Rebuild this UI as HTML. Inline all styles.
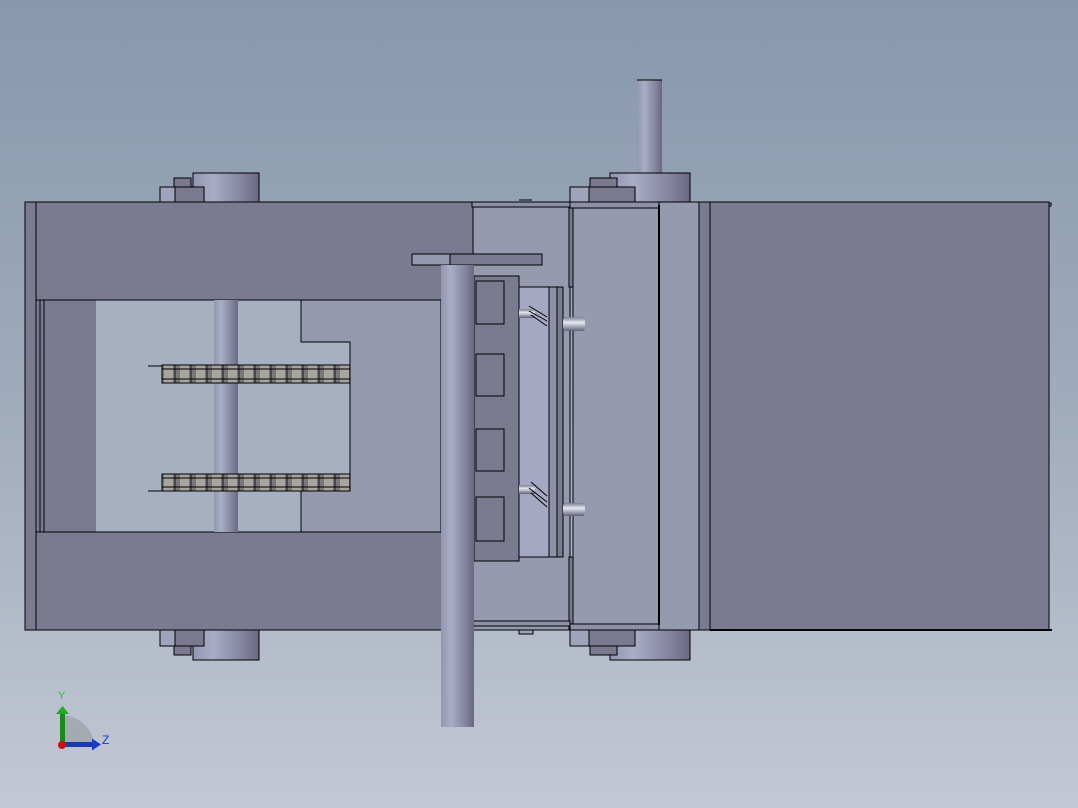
<!DOCTYPE html>
<html><head><meta charset="utf-8"><style>
html,body{margin:0;padding:0;width:1078px;height:808px;overflow:hidden}
svg{display:block}
</style></head><body>
<svg width="1078" height="808" viewBox="0 0 1078 808" xmlns="http://www.w3.org/2000/svg">
<defs>
<linearGradient id="bg" x1="0" y1="0" x2="0" y2="1">
<stop offset="0" stop-color="#8798ad"/><stop offset="0.5" stop-color="#a0abbc"/><stop offset="1" stop-color="#c3c8d4"/>
</linearGradient>
<linearGradient id="cyl" x1="0" y1="0" x2="1" y2="0">
<stop offset="0" stop-color="#9296b0"/><stop offset="0.3" stop-color="#a9adc5"/><stop offset="0.75" stop-color="#83839d"/><stop offset="1" stop-color="#6a6782"/>
</linearGradient>
<linearGradient id="pin" x1="0" y1="0" x2="0" y2="1">
<stop offset="0" stop-color="#7a7e96"/><stop offset="0.4" stop-color="#e6e8f0"/><stop offset="1" stop-color="#5f6078"/>
</linearGradient>
<pattern id="chain" x="162" y="0" width="16" height="20" patternUnits="userSpaceOnUse">
<rect width="16" height="20" fill="#7a7878"/>
<rect x="2" y="0" width="9" height="20" fill="#a8a49e"/>
<rect x="12" y="0" width="2" height="20" fill="#4a4848"/>
</pattern>
</defs>
<rect width="1078" height="808" fill="url(#bg)"/>
<g stroke="#000" stroke-width="1">
<rect x="193" y="173" width="66" height="29" fill="url(#cyl)"/>
<rect x="193" y="630" width="66" height="30" fill="url(#cyl)"/>
<rect x="160" y="187" width="44" height="15" fill="#7a7990"/>
<rect x="160" y="187" width="15" height="15" fill="#a0a4bb"/>
<rect x="174" y="178" width="17" height="9" fill="#7a7990"/>
<rect x="160" y="630" width="44" height="16" fill="#7a7990"/>
<rect x="160" y="630" width="15" height="16" fill="#a0a4bb"/>
<rect x="174" y="646" width="17" height="9" fill="#7a7990"/>
<rect x="637" y="80" width="25" height="93" fill="url(#cyl)" stroke="none"/>
<line x1="637" y1="80" x2="662" y2="80"/>
<rect x="610" y="173" width="80" height="29" fill="url(#cyl)"/>
<rect x="610" y="630" width="80" height="30" fill="url(#cyl)"/>
<rect x="570" y="187" width="65" height="15" fill="#7a7990"/>
<rect x="570" y="187" width="19" height="15" fill="#a0a4bb"/>
<rect x="590" y="178" width="27" height="9" fill="#7a7990"/>
<rect x="570" y="630" width="65" height="16" fill="#7a7990"/>
<rect x="570" y="630" width="19" height="16" fill="#a0a4bb"/>
<rect x="590" y="646" width="27" height="9" fill="#7a7990"/>
<rect x="25" y="202" width="448" height="428" fill="#7a7b90"/>
<rect x="96" y="300" width="205" height="232" fill="#a7b0c1" stroke="none"/>
<path d="M301 300 H441 V532 H301 V491 H350 V342 H301 Z" fill="#9599af"/>
<rect x="301" y="342" width="49" height="149" fill="#a7b0c1" stroke="none"/>
<path d="M301 300 V342 H350 V491 M301 491 V532" fill="none"/>
<line x1="36" y1="202" x2="36" y2="630"/>
<line x1="40" y1="300" x2="40" y2="532"/>
<line x1="44" y1="300" x2="44" y2="532"/>
<line x1="36" y1="300" x2="441" y2="300"/>
<line x1="36" y1="532" x2="441" y2="532"/>
<rect x="214" y="300" width="24" height="232" fill="url(#cyl)" stroke="none"/>
<line x1="148" y1="366" x2="162" y2="366"/>
<rect x="162" y="365" width="188" height="18" fill="url(#chain)"/>
<line x1="162" y1="369" x2="350" y2="369"/><line x1="162" y1="379" x2="350" y2="379"/>
<line x1="148" y1="491" x2="162" y2="491"/>
<rect x="162" y="474" width="188" height="17" fill="url(#chain)"/>
<line x1="162" y1="478" x2="350" y2="478"/><line x1="162" y1="487" x2="350" y2="487"/>
<rect x="473" y="207" width="97" height="423" fill="#959aaf"/>
<rect x="472" y="202" width="98" height="5" fill="#8d90a8"/>
<rect x="569" y="207" width="4" height="80" fill="#7a7b90"/>
<rect x="569" y="557" width="4" height="73" fill="#7a7b90"/>
<rect x="474" y="276" width="45" height="285" fill="#7a7b90"/>
<rect x="519" y="287" width="30" height="270" fill="#a4a8c2"/>
<rect x="549" y="287" width="8" height="270" fill="#8d90a8"/>
<rect x="557" y="287" width="6" height="270" fill="#7a7b90"/>
<rect x="476" y="281" width="28" height="43" fill="#7a7b90"/>
<rect x="476" y="354" width="28" height="42" fill="#7a7b90"/>
<rect x="476" y="429" width="28" height="42" fill="#7a7b90"/>
<rect x="476" y="497" width="28" height="44" fill="#7a7b90"/>
<rect x="473" y="621" width="97" height="5" fill="#8d90a8"/>
<rect x="519" y="309" width="16" height="9" fill="url(#pin)" stroke="none"/>
<path d="M529 306 L547 317 M529 311 L547 321 M531 315 L547 326" fill="none" stroke-width="1"/>
<rect x="519" y="485" width="16" height="9" fill="url(#pin)" stroke="none"/>
<path d="M531 482 L547 496 M529 488 L547 502 M531 493 L547 507" fill="none" stroke-width="1"/>
<rect x="573" y="202" width="86" height="428" fill="#959aaf"/>
<rect x="570" y="202" width="97" height="6" fill="#8d90a8"/>
<rect x="570" y="624" width="97" height="6" fill="#8d90a8"/>
<rect x="659" y="202" width="40" height="428" fill="#959aaf"/>
<line x1="659" y1="205" x2="659" y2="625" stroke-width="2"/>
<rect x="699" y="202" width="11" height="428" fill="#7a7b90"/>
<rect x="710" y="202" width="339" height="428" fill="#7a7b90"/>
<line x1="710" y1="630" x2="1052" y2="630" stroke-width="2"/>
<rect x="1049" y="203" width="2" height="3" fill="none"/>
<rect x="563" y="317" width="22" height="14" rx="3" fill="url(#pin)" stroke="none"/>
<rect x="563" y="503" width="22" height="13" rx="3" fill="url(#pin)" stroke="none"/>
<line x1="519" y1="200" x2="532" y2="200"/>
<rect x="519" y="630" width="14" height="4" fill="#a0a4bb"/>
<rect x="412" y="254" width="130" height="11" fill="#7a7b90"/>
<rect x="412" y="254" width="38" height="11" fill="#9599af"/>
<rect x="441" y="265" width="33" height="462" fill="url(#cyl)" stroke="none"/>
</g>
<path d="M62 745 V715 A33 33 0 0 1 94 745 Z" fill="#9ea2aa" opacity="0.8"/>
<rect x="60" y="712" width="5" height="33" fill="#1a8a1a"/>
<path d="M56 714 L62.5 706 L69 714 Z" fill="#22aa22"/>
<rect x="62" y="742" width="32" height="5" fill="#1a3ab0"/>
<path d="M92 738.5 L101 744.5 L92 750.5 Z" fill="#1a3acc"/>
<circle cx="62" cy="745" r="4" fill="#d01010"/>
<text x="58" y="699" font-family="Liberation Sans, sans-serif" font-size="11" fill="#22cc22">Y</text>
<text x="102" y="744" font-family="Liberation Sans, sans-serif" font-size="12" fill="#1a3acc">Z</text>
</svg>
</body></html>
